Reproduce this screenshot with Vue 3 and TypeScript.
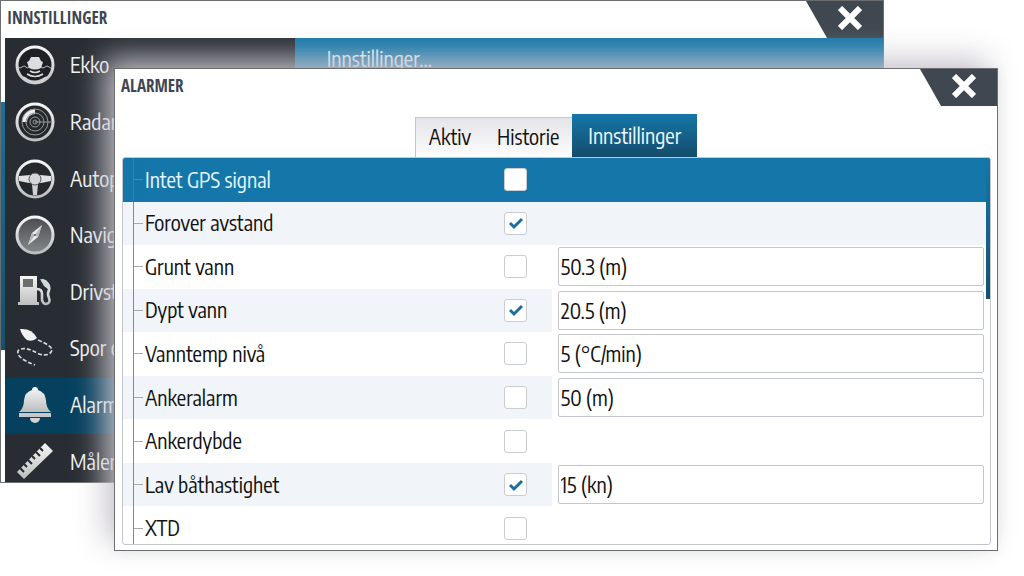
<script setup lang="ts">
import { ref } from 'vue'

interface MenuItem { id: string; label: string }
interface AlarmRow { id: string; label: string; on: boolean; value?: string }

const menu: MenuItem[] = [
  { id: 'echo', label: 'Ekko' },
  { id: 'radar', label: 'Radar' },
  { id: 'autopilot', label: 'Autopilot' },
  { id: 'nav', label: 'Navigasjon' },
  { id: 'fuel', label: 'Drivstoff' },
  { id: 'tracks', label: 'Spor og' },
  { id: 'alarms', label: 'Alarmer' },
  { id: 'units', label: 'Målenhet' },
]
const activeMenu = ref('alarms')

const tabs: string[] = ['Aktiv', 'Historie', 'Innstillinger']
const activeTab = ref('Innstillinger')

const rows = ref<AlarmRow[]>([
  { id: 'gps', label: 'Intet GPS signal', on: false },
  { id: 'forward', label: 'Forover avstand', on: true },
  { id: 'shallow', label: 'Grunt vann', on: false, value: '50.3 (m)' },
  { id: 'deep', label: 'Dypt vann', on: true, value: '20.5 (m)' },
  { id: 'temp', label: 'Vanntemp nivå', on: false, value: '5 (°C/min)' },
  { id: 'anchor', label: 'Ankeralarm', on: false, value: '50 (m)' },
  { id: 'anchordepth', label: 'Ankerdybde', on: false },
  { id: 'lowspeed', label: 'Lav båthastighet', on: true, value: '15 (kn)' },
  { id: 'xtd', label: 'XTD', on: false },
])
const selected = ref('gps')
</script>

<template>
  <main class="desktop">
    <svg class="defs" aria-hidden="true">
      <defs>
        <linearGradient id="metal" x1="0" y1="0" x2="0" y2="1">
          <stop offset="0" stop-color="#f6f6f6" />
          <stop offset="1" stop-color="#bcbec0" />
        </linearGradient>
        <linearGradient id="dial" x1="0" y1="0" x2="0" y2="1">
          <stop offset="0" stop-color="#4a4d50" />
          <stop offset="1" stop-color="#85888a" />
        </linearGradient>
      </defs>
    </svg>

    <section class="window back" aria-labelledby="back-title">
      <header class="bar">
        <h1 id="back-title">INNSTILLINGER</h1>
        <button class="close" type="button" aria-label="Lukk innstillinger">
          <svg viewBox="0 0 24 24"><path d="M2 2 L22 22 M22 2 L2 22" /></svg>
        </button>
      </header>
      <div class="body">
        <nav class="side">
          <ul>
            <li v-for="m in menu" :key="m.id">
              <button type="button" :class="{ current: m.id === activeMenu }" @click="activeMenu = m.id">
                <svg class="icon" viewBox="0 0 40 40" aria-hidden="true">
                  <template v-if="m.id === 'echo'">
                    <circle cx="20" cy="20" r="18" fill="#1d2124" stroke="url(#metal)" stroke-width="3" />
                    <path d="M5 31 q5 0 8 3 q7 3 13 0 q4 -3 9 -3 q-6 8 -15 8 q-9 0 -15 -8 z" fill="#cfd0d1" />
                    <path d="M3 22 q2 2 4 0 t4 0 t3 0 M26 22 q2 2 4 0 t4 0 t3 0" fill="none" stroke="#b8babc" stroke-width="1" />
                    <path d="M16 12 h8 l2 4 l2 1 l-2 6 q-6 3 -12 0 l-2 -6 l2 -1 z" fill="#dcdddd" />
                    <path d="M15 26 q5 3 10 0 M12 29 q8 5 16 0" fill="none" stroke="#dcdddd" stroke-width="1.7" />
                  </template>
                  <template v-else-if="m.id === 'radar'">
                    <circle cx="20" cy="20" r="18" fill="#25292c" stroke="url(#metal)" stroke-width="3" />
                    <path d="M7 20 A13 13 0 0 1 20 7 V12 A8 8 0 0 0 12 20 Z" fill="#eeeeee" />
                    <g fill="none" stroke="#96999b" stroke-width="1">
                      <circle cx="20" cy="20" r="13" />
                      <circle cx="20" cy="20" r="9" />
                      <circle cx="20" cy="20" r="5" />
                      <circle cx="20" cy="20" r="2" />
                      <path d="M20 20 H36" />
                    </g>
                  </template>
                  <template v-else-if="m.id === 'autopilot'">
                    <circle cx="20" cy="20" r="18" fill="#25292c" stroke="url(#metal)" stroke-width="3" />
                    <path d="M4 17 L15 16 H25 L36 17 V22 L26 24 H14 L4 22 Z" fill="#e0e1e1" />
                    <path d="M17 25 h6 l-1 11 h-4 z" fill="#d0d1d2" />
                    <circle cx="20" cy="20" r="6" fill="#d5d6d7" stroke="#54585b" stroke-width="1" />
                  </template>
                  <template v-else-if="m.id === 'nav'">
                    <circle cx="20" cy="20" r="18" fill="url(#dial)" stroke="url(#metal)" stroke-width="3" />
                    <path d="M27 10 L23 22 L13 30 L17 18 Z" fill="#e9e9e9" />
                    <path d="M27 10 L23 22 L20 20 Z M13 30 L17 18 L20 20 Z" fill="#b5b7b9" />
                    <circle cx="20" cy="20" r="1" fill="#555" />
                  </template>
                  <template v-else-if="m.id === 'fuel'">
                    <path d="M5 4 H22 V30 H24 V33 H3 V30 H5 Z" fill="url(#metal)" />
                    <path d="M8 7 H18 V15 H8 Z" fill="#6b6e70" />
                    <path d="M22 17 Q27 17 27 22 V28 Q28 32 31 32 Q36 31 34 26 Q32 22 34 18 Q35 13 31 10 L27 8" fill="none" stroke="url(#metal)" stroke-width="2.6" />
                    <path d="M25 7 L31 8 L35 14 L34 18 L29 14 Z" fill="#d5d6d7" />
                  </template>
                  <template v-else-if="m.id === 'tracks'">
                    <path d="M5 1 Q17 0 22 10 Q18 14 12 12 Q7 8 5 1 Z" fill="#f1f1f1" />
                    <path d="M23 12 Q37 18 37 22 Q35 29 24 26 Q8 17 3 23 Q1 30 20 37" fill="none" stroke="#d8d9da" stroke-width="1.7" stroke-dasharray="4 2" />
                  </template>
                  <template v-else-if="m.id === 'alarms'">
                    <path d="M15 33 a5 5 0 0 0 10 0 z" fill="#d3d4d5" />
                    <path d="M17 5 Q17 2 20 2 Q23 2 23 5 Q30 7 31 15 Q31 23 36 27 H4 Q9 23 9 15 Q10 7 17 5 Z" fill="url(#metal)" />
                    <path d="M4 28 H36 V32 H4 Z" fill="#c6c8c9" />
                  </template>
                  <template v-else>
                    <path d="M2 30 L30 1 L38 9 L9 37 Z" fill="url(#metal)" />
                    <path d="M5 26 l4 4 M9 22 l3 3 M13 18 l4 4 M17 14 l3 3 M21 10 l4 4 M25 6 l3 3" stroke="#25292c" stroke-width="2" />
                  </template>
                </svg>
                <span>{{ m.label }}</span>
              </button>
            </li>
          </ul>
        </nav>
        <div class="pane"><p>Innstillinger...</p></div>
      </div>
      <span class="thumb edge"></span>
    </section>

    <section class="window front" aria-labelledby="front-title">
      <header class="bar">
        <h2 id="front-title">ALARMER</h2>
        <button class="close" type="button" aria-label="Lukk alarmer">
          <svg viewBox="0 0 24 24"><path d="M2 2 L22 22 M22 2 L2 22" /></svg>
        </button>
      </header>
      <div class="tabs" role="tablist">
        <button
          v-for="t in tabs"
          :key="t"
          type="button"
          role="tab"
          :aria-selected="t === activeTab"
          :class="{ active: t === activeTab }"
          @click="activeTab = t"
        >{{ t }}</button>
      </div>
      <div class="frame">
        <table>
          <colgroup><col class="c-name"><col class="c-check"><col></colgroup>
          <tbody>
            <tr v-for="r in rows" :key="r.id" :class="{ selected: r.id === selected }" @click="selected = r.id">
              <td class="name"><label :for="r.id">{{ r.label }}</label></td>
              <td class="check"><input :id="r.id" v-model="r.on" type="checkbox"></td>
              <td class="value" :class="{ filled: r.value !== undefined }">
                <input v-if="r.value !== undefined" v-model="r.value" type="text" :aria-label="r.label">
              </td>
            </tr>
          </tbody>
        </table>
        <span class="thumb scroll"></span>
      </div>
    </section>
  </main>
</template>

<style>
body { margin: 0; background: #fff; }
</style>

<style scoped>
.desktop {
  position: relative;
  min-height: 100vh;
  overflow: hidden;
  font-family: "Encode Sans Condensed", "Roboto Condensed", "Noto Sans", sans-serif;
  font-size: 21px;
  line-height: 28px;
  color: #111;
}
.desktop *, .desktop *::before { box-sizing: border-box; }
.defs { position: absolute; width: 0; height: 0; }
button, input { font: inherit; color: inherit; margin: 0; }
button { border: 0; background: none; padding: 0; cursor: pointer; }

.window { background: #fff; border: 1px solid #6d6e70; }
.back { position: relative; margin-right: 140px; }
.front {
  position: absolute;
  top: 68px;
  left: 114px;
  right: 26px;
  padding-bottom: 5px;
  box-shadow: -10px -10px 28px 0 rgba(200, 197, 204, 0.95), 0 0 12px rgba(0, 0, 0, 0.06);
}

.bar { display: flex; align-items: center; justify-content: space-between; height: 37px; padding-left: 6px; }
.bar h1, .bar h2 {
  margin: 0;
  padding-bottom: 3px;
  font-family: "Open Sans Condensed", "Roboto Condensed", sans-serif;
  font-size: 17px;
  line-height: 24px;
  font-weight: 700;
  color: #3d4652;
}
.close {
  display: flex;
  align-items: center;
  justify-content: center;
  width: 77px;
  height: 37px;
  padding: 0 0 3px 11px;
  background: #3f4850;
  clip-path: polygon(0 0, 100% 0, 100% 100%, 21px 100%);
}
.close svg { width: 24px; height: 24px; fill: none; stroke: #fff; stroke-width: 6; }

.body { display: flex; height: 444px; margin-left: 4px; overflow: hidden; }
.side { flex: 0 0 33%; background: #272d32; }
.side ul { display: grid; grid-auto-rows: 1fr; height: 453px; margin: 0; padding: 0; list-style: none; }
.side li { display: flex; }
.side button {
  display: flex;
  align-items: center;
  gap: 15px;
  width: 100%;
  padding: 0 0 2px 10px;
  color: #f2f2f2;
  white-space: nowrap;
}
.side button.current { background: #06405f; }
.icon { flex: none; width: 40px; height: 40px; }
.pane { flex: 1; background: #1577a9; }
.pane p { margin: 0; padding: 7px 32px; color: #e8f2f8; }

.thumb { position: absolute; width: 4px; background: linear-gradient(#1d7199, #16506f); }
.edge { top: 101px; left: 0; height: 248px; }
.scroll { top: 0; right: 0; height: 141px; background: linear-gradient(#1577a9, #14506f); }

.tabs { display: flex; justify-content: center; align-items: flex-end; height: 51px; }
.tabs button {
  height: 40px;
  padding: 0 13px 2px;
  background: linear-gradient(#e4e4ea, #fdfdfd);
  border-top: 1px solid #c6c6ca;
}
.tabs button:first-child { border-left: 1px solid #c6c6ca; }
.tabs button.active { height: 43px; padding: 0 16px; border: 0; color: #eefaff; background: linear-gradient(#1577a9, #144c6b); }

.frame {
  position: relative;
  height: 388px;
  margin: 0 6px 0 7px;
  overflow: hidden;
  border: 1px solid #c3c6ca;
  border-radius: 3px;
}
table { width: 100%; height: 392px; border-collapse: collapse; table-layout: fixed; }
tr { height: 43px; }
.c-name { width: 43%; }
.c-check { width: 56px; }
td { padding: 0; }
tr:nth-child(even) td { background: #f1f5f9; }
tr td.value.filled { background: #fff; }
tr.selected td { background: #1577a9; color: #e6f6fd; }
.name { position: relative; padding-left: 22px; }
.name::before {
  content: "";
  position: absolute;
  inset: 0 auto 0 10px;
  width: 10px;
  border-left: 1px solid #85898d;
  background: linear-gradient(#a5a9ad, #a5a9ad) center / 100% 1px no-repeat;
}
.selected .name::before { opacity: 0.4; }
.name label { display: block; }
td.check { padding-right: 16px; }
.check input {
  appearance: none;
  display: block;
  width: 23px;
  height: 23px;
  margin: 0 auto;
  background: #fff;
  border: 1px solid #c9ccd0;
  border-radius: 3px;
}
.check input:checked {
  background: #fff url("data:image/svg+xml,%3Csvg xmlns='http://www.w3.org/2000/svg' viewBox='0 0 16 16'%3E%3Cpath d='M2 8 L6 12 L14 4' fill='none' stroke='%231d6f9f' stroke-width='3'/%3E%3C/svg%3E") center / 16px 16px no-repeat;
}
td.value { padding: 0 6px; }
.value input {
  display: block;
  width: 100%;
  height: 39px;
  padding: 0 2px;
  background: #fff;
  border: 1px solid #c3c6ca;
  border-radius: 2px;
}
</style>
